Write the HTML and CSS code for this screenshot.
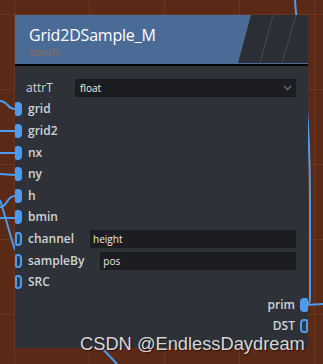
FILE: index.html
```html
<!DOCTYPE html>
<html lang="en">
<head>
    <meta charset="UTF-8">
    <title>Grid2DSample_M</title>
    <link rel="stylesheet" href="styles.css">
</head>
<body>
<div class="canvas">
    <svg class="wires" width="323" height="364" viewBox="0 0 323 364">
        <path d="M0,101 C8,101 7,109 15,109"/>
        <path d="M0,131 L15,131"/>
        <path d="M0,153 L15,153"/>
        <path d="M0,174 L15,175"/>
        <path d="M0,207 C8,207 6,196 15,196"/>
        <path d="M0,218 L15,218"/>
        <path d="M0,200 C5,215 10,235 15,250"/>
        <path d="M295,0 C297,40 310,80 310,200 L310,296 C310,303 309,305 305,305"/>
        <path d="M323,304 L306,305"/>
        <path d="M100,346 L117,364"/>
    </svg>

    <div class="node">
        <div class="node-head">
            <div class="node-title">Grid2DSample_M</div>
            <div class="node-sub">zenofx</div>
            <svg class="head-deco" width="70" height="48" viewBox="0 0 70 48">
                <polygon points="13,0 70,0 70,48 0,48" fill="#2b2e35"/>
                <line x1="35" y1="0" x2="22" y2="48" stroke="#464a52" stroke-width="1"/>
                <line x1="58" y1="0" x2="44" y2="48" stroke="#464a52" stroke-width="1"/>
            </svg>
        </div>

        <div class="node-body">
            <div class="row row-param">
                <span class="label">attrT</span>
                <div class="select">
                    <span>float</span>
                    <svg width="9" height="6" viewBox="0 0 9 6"><polyline points="1,1 4.5,4.5 8,1" fill="none" stroke="#6b7079" stroke-width="1.3"/></svg>
                </div>
            </div>

            <div class="row"><i class="sock on"></i><span class="label">grid</span></div>
            <div class="row"><i class="sock on"></i><span class="label">grid2</span></div>
            <div class="row"><i class="sock on"></i><span class="label">nx</span></div>
            <div class="row"><i class="sock on"></i><span class="label">ny</span></div>
            <div class="row"><i class="sock on"></i><span class="label">h</span></div>
            <div class="row"><i class="sock on"></i><span class="label">bmin</span></div>
            <div class="row"><i class="sock"></i><span class="label">channel</span><div class="field">height</div></div>
            <div class="row"><i class="sock"></i><span class="label">sampleBy</span><div class="field">pos</div></div>
            <div class="row"><i class="sock"></i><span class="label">SRC</span></div>

            <div class="row row-out first-out"><span class="label">prim</span><i class="sock on"></i></div>
            <div class="row row-out"><span class="label">DST</span><i class="sock"></i></div>
        </div>
    </div>

    <div class="watermark">CSDN @EndlessDaydream</div>
</div>
</body>
</html>
```

FILE: styles.css
```css
* {
    padding: 0;
    margin: 0;
    box-sizing: border-box;
}

body {
    background-color: #5b2a16;
    font-family: "Open Sans", "Noto Sans", sans-serif;
}

.canvas {
    width: 323px;
    height: 364px;
    position: relative;
    overflow: hidden;
    background-color: #5b2a16;
    background-image:
        linear-gradient(90deg, #6c3720 1px, transparent 1px),
        linear-gradient(0deg, #6c3720 1px, transparent 1px);
    background-size: 75px 75px;
    background-position: 14px 15px;
}

.wires {
    position: absolute;
    left: 0;
    top: 0;
}

.wires path {
    fill: none;
    stroke: #4b9cf0;
    stroke-width: 2;
}

.node {
    position: absolute;
    left: 15px;
    top: 15px;
    width: 293px;
    height: 333px;
    background-color: #2e3238;
    display: flex;
    flex-direction: column;
}

.node-head {
    position: relative;
    height: 51px;
    background-color: #4b6b97;
    border-bottom: 2px solid #000;
    padding: 9px 0 0 14px;
}

.node-title {
    color: #ffffff;
    font-size: 16px;
    line-height: 22px;
    letter-spacing: -0.2px;
}

.node-sub {
    color: #8c6c52;
    font-size: 10px;
    line-height: 12px;
}

.head-deco {
    position: absolute;
    right: 0;
    top: 0;
}

.node-body {
    padding-top: 11px;
    display: flex;
    flex-direction: column;
}

.row {
    height: 21.6px;
    display: flex;
    align-items: center;
    padding-right: 12px;
}

.label {
    color: #cdd2da;
    font-size: 12px;
    font-weight: 600;
    line-height: 14px;
    margin-left: 6px;
    white-space: nowrap;
}

.row-param .label {
    margin-left: 11px;
    font-weight: 400;
    width: 49px;
}

.sock {
    display: block;
    width: 8px;
    height: 14px;
    border: 2px solid #4b9cf0;
    border-radius: 4px;
    background-color: #2c3a4c;
    flex-shrink: 0;
}

.sock.on {
    background-color: #4b9cf0;
}

.row .sock:first-child {
    width: 7px;
    border-top-left-radius: 2px;
    border-bottom-left-radius: 2px;
}

.select {
    flex: 1;
    height: 18px;
    background-color: #1b1d21;
    display: flex;
    align-items: center;
    justify-content: space-between;
    padding: 0 4px 0 5px;
    color: #f0f0f0;
    font-size: 10px;
}

.field {
    flex: 1;
    height: 18px;
    margin-left: 16px;
    background-color: #1b1d21;
    color: #e8e8e8;
    font-size: 10px;
    line-height: 18px;
    padding-left: 3px;
}

.row-out {
    justify-content: flex-end;
    padding-right: 0;
}

.row-out .label {
    margin-left: 0;
    margin-right: 5px;
}

.row-out .sock {
    border-radius: 4px 2px 2px 4px;
}

.first-out {
    margin-top: 1px;
}

.watermark {
    position: absolute;
    left: 80px;
    top: 337px;
    font-family: "Liberation Sans", Arial, sans-serif;
    font-size: 18.3px;
    line-height: 14px;
    color: #d6d6d6;
    text-shadow: 1px 1px 1px rgba(0, 0, 0, 0.6);
    white-space: nowrap;
}
```
